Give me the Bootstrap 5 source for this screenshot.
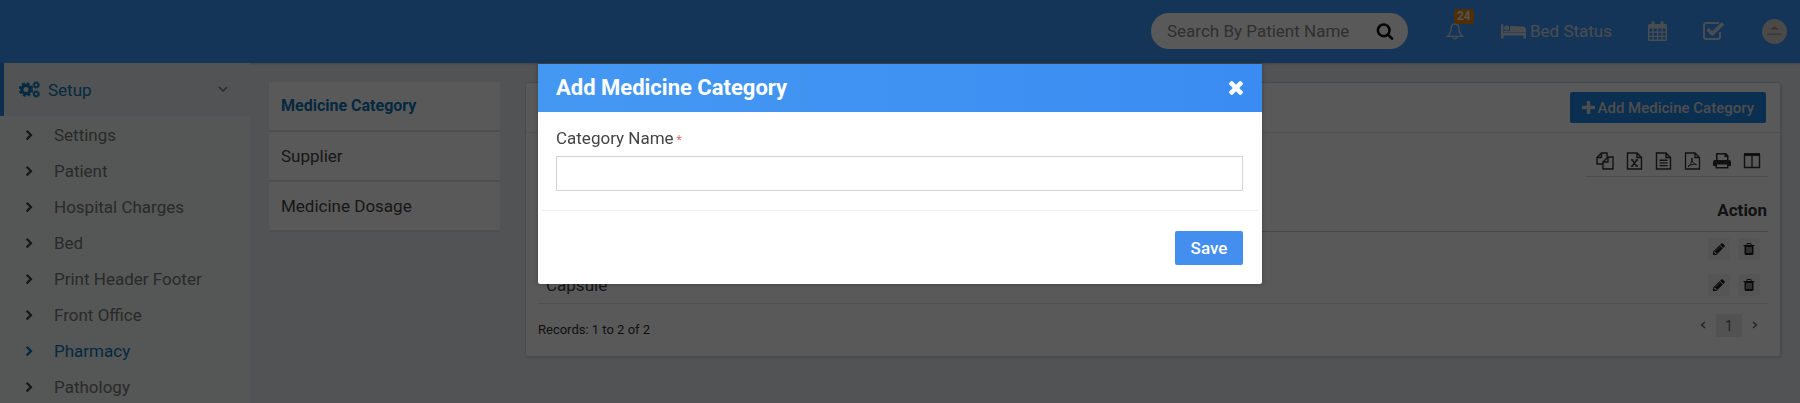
<!DOCTYPE html>
<html lang="en">
<head>
<meta charset="utf-8">
<meta name="viewport" content="width=device-width, initial-scale=1">
<title>Add Medicine Category</title>
<link href="https://cdn.jsdelivr.net/npm/bootstrap@5.3.0/dist/css/bootstrap.min.css" rel="stylesheet">
<style>
body{font-family:Roboto,"Liberation Sans",sans-serif;font-size:17px;line-height:24px;color:#444;background:#eaedf3}
body.modal-open{overflow:hidden}
svg{display:block;fill:currentColor;flex:none}
.ln{fill:none;stroke:currentColor}
a{color:inherit;text-decoration:none}
.topbar{height:63px;background:#3d99fb;color:#fff;padding:0 13px 1px 0;box-shadow:0 1px 2px rgba(0,0,0,.2)}
.topbar a{color:#d5dde6}
.finder{width:257px;height:36px;background:#fff;border-radius:18px;padding:0 14px 0 16px;margin-right:38px}
.finder input{border:0;background:none;min-width:0;flex:1;padding:0;color:#777;outline:0}
.finder input::placeholder{color:#888;opacity:1}
.finder button,.x-btn{border:0;background:none;padding:0;color:#111}
.alert-count{position:absolute;left:8px;top:-13px;font-size:12px;line-height:15px;padding:0 3px;border-radius:3px;background:#e8850c;color:#eee;font-weight:700}
.bed-link{margin-left:37px}
.avatar-link{margin-left:37px}
.avatar{width:25px;height:25px}
.side{width:250px;background:#f4f8f6;min-height:340px;flex:none}
.side-top{height:53px;background:#eaedf0;border-left:4px solid #2283e8;padding:0 22px 0 15px;color:#0d76b8}
.side-list{padding-top:1px}
.side-list a{height:36px;padding-left:23px;color:#777}
.side-list a svg{color:#444;margin-right:17px}
.side-list a.on,.side-list a.on svg{color:#0c74b8}
.tabs-col{width:231px;flex:none;margin:19px 25px 0 19px}
.tabs-col a{height:50px;padding:0 12px;background:#fff;border-bottom:2px solid #e0e2e6;color:#444}
.tabs-col a.on{font-size:16px;font-weight:700;color:#0c74b8}
.panel{margin:19px 19px 0 0;border:1px solid #d2d6de;border-radius:3px;background:#fff;min-width:0;box-shadow:1px 1px 2px rgba(0,0,0,.12)}
.panel-head{height:50px;border-bottom:1px solid #e4e4e4;padding:0 14px}
.add-btn{background:#1d86e9;border:0;color:#ddd;height:31px;border-radius:2px;padding:0 12px;font-size:15px;font-weight:500}
.add-btn svg{margin-right:3px}
.tools{border-bottom:1px solid #ddd;height:32px;padding:0 7px 0 10px;gap:12px;color:#333}
.tools button,.act,.pager button{border:0;background:none;padding:0;color:inherit}
.meds{margin-top:12px}
.meds th,.meds td{padding:0 8px;height:36px;vertical-align:middle;font-size:17px}
.meds thead th{height:42px;border-bottom:1px solid #ccc;font-weight:700;color:#333}
.meds th:last-child{padding-right:1px;text-align:right}
.meds tbody{border-bottom:1px solid #e6e6e6}
.meds .act{width:22px;height:22px;background:#f3f3f3;color:#222;border-radius:2px}
.records{font-size:13px;color:#333}
.lower{padding:6px 14px 14px 4px}
.pager{gap:10px;color:#666}
.pager .now{width:26px;height:23px;background:#ebebeb;font-size:14px}
.modal-backdrop{--bs-backdrop-opacity:.65}
.med-dialog{max-width:724px;margin:64px auto 0}
.med-dialog .modal-content{border:0;border-radius:2px;box-shadow:0 0 4px rgba(0,0,0,.3)}
.med-dialog .modal-header{height:48px;padding:0 19px 0 18px;border:0;border-radius:0;background:linear-gradient(90deg,#4598f2,#3a8cf2);color:#fff}
.med-dialog .modal-title{font-size:22px;line-height:28px;font-weight:700}
.med-dialog .modal-body{padding:14px 19px 19px 18px}
.med-dialog label{display:block;color:#444;margin-bottom:6px}
.req{font-size:12px;line-height:1;color:#e66}
.med-dialog .form-control{height:35px;border:1px solid #d2d2d2;border-radius:0}
.med-dialog .modal-footer{height:74px;padding:0 15px;margin:0 4px;border-top:1px solid #f0f0f0}
.save{background:#448ef0;color:#fff;border:0;border-radius:2px;height:34px;width:68px;padding:0;font-weight:500}
.modal-footer>*{margin:0}
.x-btn{color:#fff}
</style>
</head>
<body class="modal-open">
<svg class="d-none" aria-hidden="true">
<symbol id="chev" viewBox="0 0 1792 1792"><path d="M1363 877l-742 742q-19 19-45 19t-45-19l-166-166q-19-19-19-45t19-45l531-531-531-531q-19-19-19-45t19-45l166-166q19-19 45-19t45 19l742 742q19 19 19 45t-19 45z"/></symbol>
<symbol id="pencil" viewBox="0 0 1792 1792"><path d="M491 1536l91-91-235-235-91 91v107h128v128h107zm523-928q0-22-22-22-10 0-17 7l-542 542q-7 7-7 17 0 22 22 22 10 0 17-7l542-542q7-7 7-17zm-54-192l416 416-832 832h-416v-416zm683 96q0 53-37 90l-166 166-416-416 166-165q36-38 90-38 53 0 91 38l235 234q37 39 37 91z"/></symbol>
<symbol id="trash" viewBox="0 0 1792 1792"><path d="M704 1376v-704q0-14-9-23t-23-9h-64q-14 0-23 9t-9 23v704q0 14 9 23t23 9h64q14 0 23-9t9-23zm256 0v-704q0-14-9-23t-23-9h-64q-14 0-23 9t-9 23v704q0 14 9 23t23 9h64q14 0 23-9t9-23zm256 0v-704q0-14-9-23t-23-9h-64q-14 0-23 9t-9 23v704q0 14 9 23t23 9h64q14 0 23-9t9-23zm-544-992h448l-48-117q-7-9-17-11h-317q-10 2-17 11zm928 32v64q0 14-9 23t-23 9h-96v948q0 83-47 143.500t-113 60.500h-832q-66 0-113-58.500t-47-141.500v-952h-96q-14 0-23-9t-9-23v-64q0-14 9-23t23-9h309l70-167q15-37 54-63t79-26h320q40 0 79 26t54 63l70 167h309q14 0 23 9t9 23z"/></symbol>
</svg>

<nav class="topbar d-flex align-items-center justify-content-end" aria-label="Top">
  <form class="finder d-flex align-items-center mt-0">
    <input type="text" placeholder="Search By Patient Name" aria-label="Search By Patient Name">
    <button type="button" aria-label="Search"><svg width="18" height="18" viewBox="0 0 1792 1792"><path d="M1216 832q0-185-131.500-316.500t-316.500-131.500-316.500 131.500-131.500 316.500 131.500 316.500 316.500 131.500 316.500-131.500 131.500-316.500zm512 832q0 52-38 90t-90 38q-54 0-90-38l-343-342q-179 124-399 124-143 0-273.500-55.500t-225-150-150-225-55.500-273.500 55.500-273.500 150-225 225-150 273.500-55.500 273.500 55.500 225 150 150 225 55.500 273.500q0 220-124 399l343 343q37 37 37 90z"/></svg></button>
  </form>
  <a href="#" class="position-relative" aria-label="Notifications"><svg class="ln" width="18" height="18" viewBox="0 0 18 18" stroke-width="1.300"><path d="M9 1.800C6 2.200 5 4.400 5 7c0 3.500-1.200 5.500-3.700 7.400h15.400C14.200 12.500 13 10.500 13 7c0-2.600-1-4.800-4-5.200zM9 .5v1.500M7 15c.2 2.400 3.800 2.400 4 0"/></svg><span class="alert-count">24</span></a>
  <a href="#" class="bed-link d-flex align-items-center gap-1"><svg width="25" height="15" viewBox="0 0 25 15"><path d="M0 1q0-1 1.200-1t1.200 1v8h22.600v5.500h-2.500v-3h-20v3H0zM3 8.500h22V6q0-3-3-3.400L10.500 2Q9 2 9 3v4H3zM5.700 1.500a2.500 2.500 0 1 1 0 5 2.500 2.500 0 0 1 0-5z"/></svg><span>Bed Status</span></a>
  <a href="#" class="ms-4 ps-2" aria-label="Calendar"><svg class="ms-1" width="19" height="20" viewBox="0 0 19 20"><path fill-rule="evenodd" d="M1.500 3h2V1.500q0-1.500 1.500-1.500t1.500 1.500V3h6V1.500q0-1.500 1.500-1.500t1.500 1.500V3h2Q19 3 19 4.500v14q0 1.500-1.500 1.500h-16Q0 20 0 18.500v-14Q0 3 1.500 3zM1.400 7.500v3h3v-3zm4.200 0v3h3.300v-3zm4.500 0v3h3.300v-3zm4.500 0v3h3v-3zM1.400 11.700v3h3v-3zm4.200 0v3h3.300v-3zm4.500 0v3h3.300v-3zm4.500 0v3h3v-3zM1.400 15.900v2.700h3v-2.700zm4.200 0v2.700h3.300v-2.700zm4.500 0v2.700h3.300v-2.700zm4.500 0v2.700h3v-2.700z"/></svg></a>
  <a href="#" class="ms-4 ps-2" aria-label="Tasks"><svg class="ms-1" width="22" height="20" viewBox="0 0 22 20"><path class="ln" stroke-width="2" d="M17 11v4.500q0 2.500-2.500 2.500h-11Q1 18 1 15.500v-11Q1 2 3.500 2h11q1 0 1.500.3"/><path class="ln" stroke-width="3.600" d="M4.500 8L9.200 12.700 20 2.500"/></svg></a>
  <a href="#" class="avatar-link" aria-label="Account"><svg class="avatar" viewBox="0 0 25 25"><circle cx="12.500" cy="12.500" r="12.500" fill="#d5d3d0"/><path d="M8.500 10.500q1-2 3-2l1-2 1 2q2 0 3 2z" fill="#b08a78"/><path d="M5 14.500h15v1.500H5z" fill="#bb9f94"/></svg></a>
</nav>

<div class="d-flex align-items-start">
  <aside class="side">
    <a href="#" class="side-top d-flex align-items-center">
      <svg class="me-2" width="21" height="17" viewBox="0 0 21 17"><circle class="ln" cx="7" cy="8.500" r="4.100" stroke-width="3.200"/><circle class="ln" cx="7" cy="8.500" r="6.200" stroke-width="2" stroke-dasharray="2.870 2"/><circle class="ln" cx="17.200" cy="4" r="2.200" stroke-width="1.700"/><circle class="ln" cx="17.200" cy="4" r="3.200" stroke-width="1" stroke-dasharray="1.500 1"/><circle class="ln" cx="17.200" cy="13" r="2.200" stroke-width="1.700"/><circle class="ln" cx="17.200" cy="13" r="3.200" stroke-width="1" stroke-dasharray="1.500 1"/></svg>
      <span class="flex-grow-1">Setup</span>
      <svg class="ln text-secondary" width="10" height="7" viewBox="0 0 10 7" stroke-width="1.500"><path d="M1 1l4 4 4-4"/></svg>
    </a>
    <div class="side-list">
      <a href="#" class="d-flex align-items-center"><svg width="14" height="11" viewBox="100 0 1792 1792"><use href="#chev" width="1792" height="1792"/></svg>Settings</a>
      <a href="#" class="d-flex align-items-center"><svg width="14" height="11" viewBox="100 0 1792 1792"><use href="#chev" width="1792" height="1792"/></svg>Patient</a>
      <a href="#" class="d-flex align-items-center"><svg width="14" height="11" viewBox="100 0 1792 1792"><use href="#chev" width="1792" height="1792"/></svg>Hospital Charges</a>
      <a href="#" class="d-flex align-items-center"><svg width="14" height="11" viewBox="100 0 1792 1792"><use href="#chev" width="1792" height="1792"/></svg>Bed</a>
      <a href="#" class="d-flex align-items-center"><svg width="14" height="11" viewBox="100 0 1792 1792"><use href="#chev" width="1792" height="1792"/></svg>Print Header Footer</a>
      <a href="#" class="d-flex align-items-center"><svg width="14" height="11" viewBox="100 0 1792 1792"><use href="#chev" width="1792" height="1792"/></svg>Front Office</a>
      <a href="#" class="on d-flex align-items-center"><svg width="14" height="11" viewBox="100 0 1792 1792"><use href="#chev" width="1792" height="1792"/></svg>Pharmacy</a>
      <a href="#" class="d-flex align-items-center"><svg width="14" height="11" viewBox="100 0 1792 1792"><use href="#chev" width="1792" height="1792"/></svg>Pathology</a>
    </div>
  </aside>

  <nav class="tabs-col" aria-label="Pharmacy setup">
    <a href="#" class="on d-flex align-items-center">Medicine Category</a>
    <a href="#" class="d-flex align-items-center">Supplier</a>
    <a href="#" class="d-flex align-items-center">Medicine Dosage</a>
  </nav>

  <main class="panel flex-grow-1">
    <div class="panel-head d-flex align-items-center justify-content-end">
      <button type="button" class="add-btn d-flex align-items-center"><svg width="13" height="13" viewBox="192 128 1408 1408"><path d="M1600 736v192q0 40-28 68t-68 28h-416v416q0 40-28 68t-68 28h-192q-40 0-68-28t-28-68v-416h-416q-40 0-68-28t-28-68v-192q0-40 28-68t68-28h416v-416q0-40 28-68t68-28h192q40 0 68 28t28 68v416h416q40 0 68 28t28 68z"/></svg>Add Medicine Category</button>
    </div>
    <div class="px-2">
      <div class="d-flex justify-content-end mx-1 pt-2">
        <div class="tools d-flex align-items-center mt-1">
          <button type="button" aria-label="Copy"><svg class="ln" width="18" height="18" viewBox="0 0 18 18" stroke-width="1.400"><path d="M11 5V1H5.500L1 5.500V12h6M5.500 1v4.500H1M12 5h5v12H7V10zM12 5v5H7"/></svg></button>
          <button type="button" aria-label="Excel"><svg class="ln" width="17" height="18" viewBox="0 0 17 18" stroke-width="1.400"><path d="M11 1H1.500v16h14V5.500zM11 1v4.500h4.500M5 8h2.500M9.500 8H12M5 14h2.500M9.500 14H12M6.200 8l4.600 6M10.800 8l-4.600 6"/></svg></button>
          <button type="button" aria-label="CSV"><svg class="ln" width="17" height="18" viewBox="0 0 17 18" stroke-width="1.400"><path d="M11 1H1.500v16h14V5.500zM11 1v4.500h4.500M4.500 8.200h8M4.500 10.900h8M4.500 13.600h8"/></svg></button>
          <button type="button" aria-label="PDF"><svg class="ln" width="17" height="18" viewBox="0 0 17 18" stroke-width="1.300"><path d="M11 1H1.500v16h14V5.500zM11 1v4.500h4.500"/><path stroke-width="1" d="M4 14.500c1.500-.5 4.500-5 4-8.500-.8 3 1.500 6 4.500 6.500-2.500-.8-6 0-8.500 2z"/></svg></button>
          <button type="button" aria-label="Print"><svg width="18" height="17" viewBox="0 0 18 17"><path fill-rule="evenodd" d="M3 8V1h10l2.500 2.500V8H16q2 0 2 2v4h-2.500v2.500h-13V14H0v-4q0-2 2-2zM4.500 2.500V8h9.500V5h-2.500V2.500zM4 12.500V15h10v-2.500z"/></svg></button>
          <button type="button" aria-label="Columns"><svg class="ln" width="18" height="17" viewBox="0 0 18 17" stroke-width="1.400"><path d="M1.500 2v13.500h15V2M9 3v12.500"/><path stroke-width="3" d="M1 2.500h16"/></svg></button>
        </div>
      </div>
      <div class="px-1">
      <table class="meds w-100">
        <thead><tr><th>Medicine Category</th><th>Action</th></tr></thead>
        <tbody>
          <tr><td>Syrup</td><td><div class="d-flex justify-content-end gap-2"><button type="button" class="act" aria-label="Edit"><svg class="m-auto" width="14" height="14"><use href="#pencil"/></svg></button><button type="button" class="act" aria-label="Delete"><svg class="m-auto" width="14" height="14"><use href="#trash"/></svg></button></div></td></tr>
          <tr><td>Capsule</td><td><div class="d-flex justify-content-end gap-2"><button type="button" class="act" aria-label="Edit"><svg class="m-auto" width="14" height="14"><use href="#pencil"/></svg></button><button type="button" class="act" aria-label="Delete"><svg class="m-auto" width="14" height="14"><use href="#trash"/></svg></button></div></td></tr>
        </tbody>
      </table>
      </div>
      <div class="lower d-flex justify-content-between align-items-start">
        <div class="records pt-2">Records: 1 to 2 of 2</div>
        <div class="pager d-flex align-items-center pt-1">
          <button type="button" aria-label="Previous"><svg class="ln" width="6" height="8" viewBox="0 0 6 8" stroke-width="1.500"><path d="M5 1L1.500 4 5 7"/></svg></button>
          <button type="button" class="now">1</button>
          <button type="button" aria-label="Next"><svg class="ln" width="6" height="8" viewBox="0 0 6 8" stroke-width="1.500"><path d="M1 1l3.500 3L1 7"/></svg></button>
        </div>
      </div>
    </div>
  </main>
</div>

<div class="modal-backdrop show"></div>
<div class="modal show d-block" tabindex="-1" role="dialog" aria-labelledby="dlg-title">
  <div class="modal-dialog med-dialog">
    <form class="modal-content">
      <div class="modal-header">
        <h4 class="modal-title" id="dlg-title">Add Medicine Category</h4>
        <button type="button" class="x-btn" aria-label="Close"><svg width="14" height="14" viewBox="302 366 1188 1188"><path d="M1490 1322q0 40-28 68l-136 136q-28 28-68 28t-68-28l-294-294-294 294q-28 28-68 28t-68-28l-136-136q-28-28-28-68t28-68l294-294-294-294q-28-28-28-68t28-68l136-136q28-28 68-28t68 28l294 294 294-294q28-28 68-28t68 28l136 136q28 28 28 68t-28 68l-294 294 294 294q28 28 28 68z"/></svg></button>
      </div>
      <div class="modal-body">
        <label for="cat-name">Category Name<span class="req"> *</span></label>
        <input type="text" class="form-control shadow-none" id="cat-name">
      </div>
      <div class="modal-footer">
        <button type="button" class="save">Save</button>
      </div>
    </form>
  </div>
</div>
<script src="https://cdn.jsdelivr.net/npm/bootstrap@5.3.0/dist/js/bootstrap.bundle.min.js"></script>
</body>
</html>
